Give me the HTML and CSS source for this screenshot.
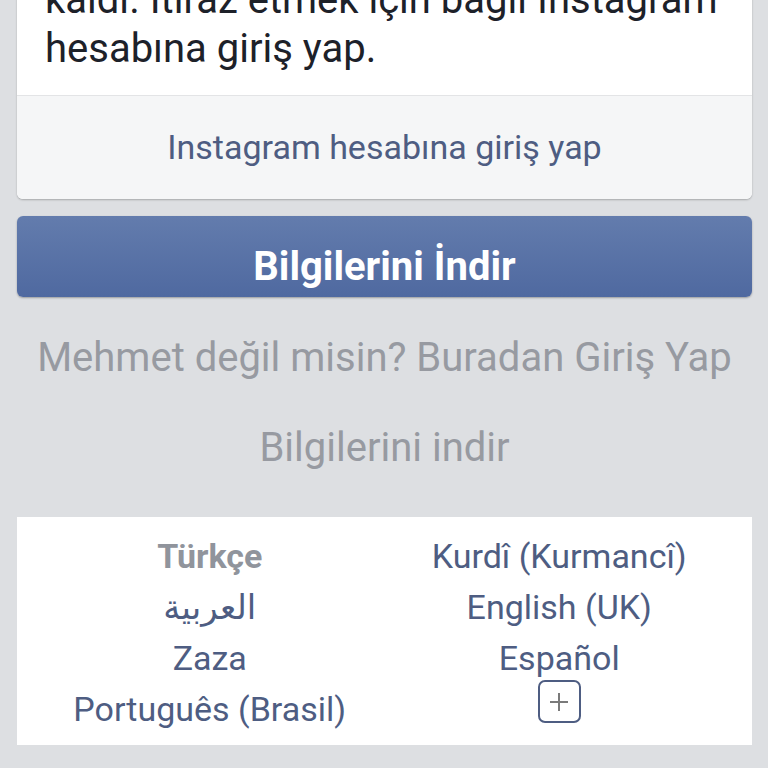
FILE: index.html
```html
<!DOCTYPE html>
<html lang="tr">
<head>
  <meta charset="UTF-8"/>
  <title>Bilgilerini İndir</title>
  <link rel="stylesheet" href="styles.css">
</head>
<body>
  <div class="card">
    <div class="card-body">
      kaldı. İtiraz etmek için bağlı Instagram<br>hesabına giriş yap.
    </div>
    <a class="card-foot" href="#">Instagram hesabına giriş yap</a>
  </div>

  <button class="primary">Bilgilerini İndir</button>

  <a class="muted first" href="#">Mehmet değil misin? Buradan Giriş Yap</a>
  <a class="muted" href="#">Bilgilerini indir</a>

  <div class="langs">
    <span class="lang current">Türkçe</span>
    <a class="lang" href="#">Kurdî (Kurmancî)</a>
    <a class="lang" href="#" dir="rtl">العربية</a>
    <a class="lang" href="#">English (UK)</a>
    <a class="lang" href="#">Zaza</a>
    <a class="lang" href="#">Español</a>
    <a class="lang" href="#">Português (Brasil)</a>
    <span class="lang">
      <span class="more">
        <svg width="24" height="24" viewBox="0 0 24 24"><path d="M12 3v18M3 12h18" stroke="#7a7a7a" stroke-width="2" fill="none"/></svg>
      </span>
    </span>
  </div>
</body>
</html>
```

FILE: styles.css
```css
* { margin:0; padding:0; box-sizing:border-box }
body {
  background:#dddfe2; overflow:hidden; height:768px;
  font-family:Roboto,"DejaVu Sans",sans-serif;
  padding:0 16px 0 17px;
}
a { text-decoration:none }

/* Card */
.card {
  margin-top:-45px; background:#fff;
  border-radius:0 0 6px 6px;
  box-shadow:0 1px 2px rgba(0,0,0,.25);
  overflow:hidden;
}
.card-body {
  padding:20px 28px 22px;
  font-size:40px; line-height:49px; color:#1d2129;
  white-space:nowrap;
}
.card-foot {
  display:block; height:104px; line-height:103px;
  border-top:1px solid #e3e4e6; background:#f5f6f7;
  text-align:center; font-size:34px; color:#4e5d82;
}

/* Button */
.primary {
  display:block; width:100%; height:81px; margin-top:17px;
  padding-top:20px; line-height:59px;
  background:linear-gradient(#637cad,#4f69a0);
  border:none; border-radius:6px;
  box-shadow:0 1px 2px rgba(0,0,0,.3);
  color:#fff; font-family:inherit; font-size:40px; font-weight:bold;
}

.muted {
  display:block; height:90px; line-height:90px;
  text-align:center; font-size:40px; color:#979aa1;
}
.muted.first { margin-top:16px }

/* Language list */
.langs {
  margin-top:24px; background:#fff;
  padding:13px 18px 11px;
  display:grid; grid-template-columns:1fr 1fr; grid-auto-rows:51px;
}
.lang {
  display:flex; align-items:center; justify-content:center;
  font-size:34px; color:#4e5d82;
}
.lang.current { font-weight:bold; color:#90949c }
.more {
  width:43px; height:43px; border:2px solid #4e5d82; border-radius:7px;
  margin-bottom:14px;
  display:flex; align-items:center; justify-content:center;
}
```
